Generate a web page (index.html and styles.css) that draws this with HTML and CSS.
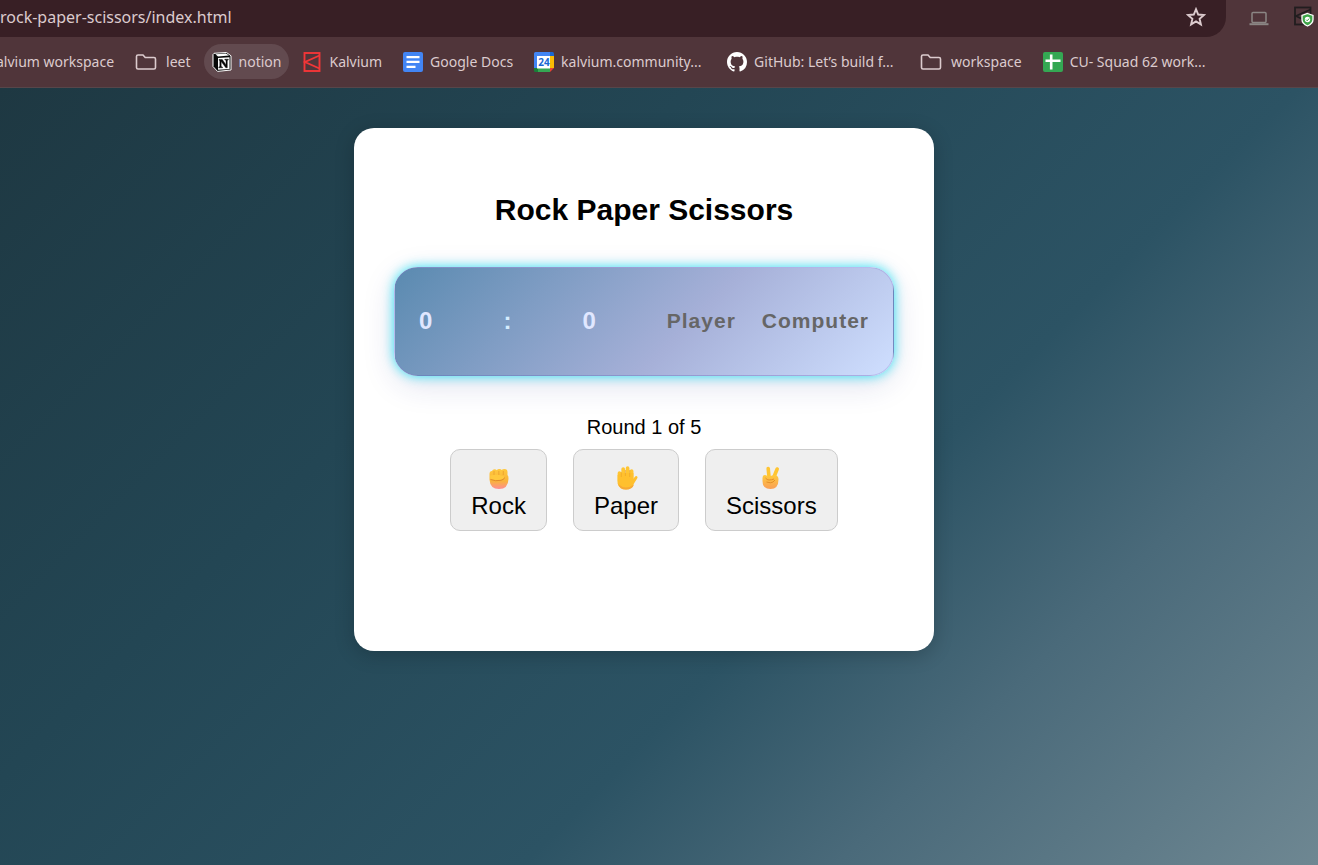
FILE: index.html
```html
<!DOCTYPE html>
<html lang="en">
<head>
<meta charset="utf-8">
<title>Rock Paper Scissors</title>
<link rel="stylesheet" href="styles.css">
</head>
<body>
<header class="browser">
  <div class="toolbar">
    <div class="omnibox">
      <input class="url" type="text" aria-label="Address" value="rock-paper-scissors/index.html">
      <button class="icon-button" type="button" aria-label="Bookmark this page">
        <svg width="20" height="20" viewBox="0 0 20 20" fill="none" stroke="#dccbce" stroke-width="1.9"><path d="M10 2.200l2.200 5.300 5.800.5-4.400 3.800 1.300 5.600-4.900-3-4.900 3 1.300-5.600L2 8l5.800-.5z"/></svg>
      </button>
    </div>
    <div class="extensions">
      <button class="icon-button" type="button" aria-label="Device">
        <svg width="20" height="20" viewBox="0 0 20 20" fill="none" stroke="#8b8684" stroke-width="1.500"><rect x="3" y="5.500" width="14" height="10" rx="1"/><path d="M.5 17.200h19" stroke-width="2"/></svg>
      </button>
      <button class="icon-button" type="button" aria-label="Kalvium extension">
        <svg width="22" height="22" viewBox="0 0 22 22"><g fill="none" stroke="#211d1f" stroke-width="1.800"><rect x="2" y="1.500" width="15.500" height="17"/><path d="M17.500 3.500L3 10l14.500 7"/></g><path d="M14.500 7.500l5.500 2v4q0 4-5.500 6.500-5.500-2.500-5.500-6.500v-4z" fill="#3fa549" stroke="#fff" stroke-width="1.300"/><circle cx="14.500" cy="13.500" r="2.700" fill="#fff"/><path d="M13 13.600l1.200 1.200 2-2.300" fill="none" stroke="#3fa549"/></svg>
      </button>
    </div>
  </div>
  <nav class="bookmarks" aria-label="Bookmarks">
    <a class="bookmark" href="#"><span>alvium workspace</span></a>
    <a class="bookmark folder" href="#"><svg width="22" height="18" viewBox="0 0 22 18" fill="none" stroke="#dccbce" stroke-width="1.600"><path d="M1.500 3.500q0-1.500 1.500-1.500h5l2.200 2.500H19q1.500 0 1.500 1.500v8.500q0 1.500-1.500 1.500H3q-1.500 0-1.500-1.500z"/></svg><span>leet</span></a>
    <a class="bookmark active" href="#"><svg width="20" height="20" viewBox="0 0 20 20"><path d="M2 1.300L14.500.5 19 3.800V18L5.500 19.400 1 14.500V2.500z" fill="#080808" stroke="#fff" stroke-width="1"/><path d="M6 6L17.500 5.200V17L6 17.800z" fill="#fff"/><path d="M3.500 2.300l10.500-.7 3 2L6 4.400z" fill="#fff"/><path d="M7 7.500h3.300l3.700 5.300V8.300l-1.200-.3V7.200h3.500v.8l-1 .4v7.300h-1.500L9.200 9.600v4.900l1.300.5v.8H6.800v-.9l1-.4V8.600L7 8.200z" fill="#080808" stroke="#080808" stroke-width=".4"/></svg><span>notion</span></a>
    <a class="bookmark" href="#"><svg width="20" height="20" viewBox="0 0 20 20" fill="none" stroke="#f23638" stroke-width="1.900"><rect x="2.500" y="1" width="15" height="18"/><path d="M17.500 3.500L3 10l14.500 6.500"/></svg><span>Kalvium</span></a>
    <a class="bookmark" href="#"><svg width="20" height="20" viewBox="0 0 20 20"><rect width="20" height="20" rx="2" fill="#4285f4"/><path d="M3.500 5.200h13M3.500 9.900h13M3.500 14.800h9" stroke="#fff" stroke-width="2.200"/></svg><span>Google Docs</span></a>
    <a class="bookmark wide" href="#"><svg width="20" height="20" viewBox="0 0 20 20"><path d="M1.500 0H16v4H4v12H0V1.500Q0 0 1.500 0z" fill="#4285f4"/><path d="M16 0h2.500Q20 0 20 1.500V4h-4z" fill="#1967d2"/><path d="M16 4h4v12h-4z" fill="#fbbc04"/><path d="M4 16h12v4H4z" fill="#34a853"/><path d="M0 16h4v4H1.500Q0 20 0 18.500z" fill="#188038"/><path d="M16 16h4l-4 4z" fill="#ea4335"/><path d="M3 4h13v12.500H3z" fill="#fff"/><text class="cal-day" x="10" y="14" text-anchor="middle">24</text></svg><span>kalvium.community...</span></a>
    <a class="bookmark wide" href="#"><svg width="20" height="20" viewBox="0 0 16 16"><path fill="#fff" d="M8 0C3.580 0 0 3.580 0 8c0 3.540 2.290 6.530 5.470 7.590.4.070.55-.17.55-.38 0-.19-.01-.82-.01-1.490-2.010.37-2.530-.49-2.690-.94-.09-.23-.48-.94-.82-1.130-.28-.15-.68-.52-.01-.53.63-.01 1.080.58 1.230.82.720 1.210 1.870.87 2.330.66.070-.52.28-.87.510-1.070-1.780-.2-3.640-.89-3.640-3.950 0-.87.310-1.590.82-2.150-.08-.2-.36-1.020.08-2.120 0 0 .67-.21 2.200.82.640-.18 1.320-.27 2-.27s1.360.09 2 .27c1.530-1.040 2.200-.82 2.200-.82.440 1.100.16 1.920.08 2.120.51.560.82 1.270.82 2.150 0 3.070-1.870 3.750-3.650 3.950.29.250.54.730.54 1.480 0 1.070-.01 1.930-.01 2.200 0 .21.150.46.55.38A8.010 8.010 0 0016 8c0-4.420-3.580-8-8-8z"/></svg><span>GitHub: Let’s build f...</span></a>
    <a class="bookmark folder" href="#"><svg width="22" height="18" viewBox="0 0 22 18" fill="none" stroke="#dccbce" stroke-width="1.600"><path d="M1.500 3.500q0-1.500 1.500-1.500h5l2.200 2.500H19q1.500 0 1.500 1.500v8.500q0 1.500-1.500 1.500H3q-1.500 0-1.500-1.500z"/></svg><span>workspace</span></a>
    <a class="bookmark wide" href="#"><svg width="20" height="20" viewBox="0 0 20 20"><rect width="20" height="20" rx="2" fill="#34a853"/><path d="M8.200 2.500v15M2.500 8.800h15" stroke="#fff" stroke-width="2.600"/></svg><span>CU- Squad 62 work...</span></a>
  </nav>
</header>
<main class="page">
  <section class="card">
    <h1 class="title">Rock Paper Scissors</h1>
    <div class="scoreboard">
      <span class="score">0</span>
      <span class="score colon">:</span>
      <span class="score">0</span>
      <div class="labels"><span>Player</span><span>Computer</span></div>
    </div>
    <p class="round">Round 1 of 5</p>
    <div class="choices">
      <button class="choice" type="button">
        <svg width="28" height="28" viewBox="0 0 28 28"><defs><linearGradient id="fist" x2="0" y2="1"><stop offset="0" stop-color="#ffc83d"/><stop offset=".6" stop-color="#f9b43a"/><stop offset="1" stop-color="#ff8d91"/></linearGradient></defs><path d="M4.500 10q0-3 2.500-3 .7-1.800 2.500-1.800 1.600 0 2.300 1 .7-1.200 2.500-1.200 1.700 0 2.400 1.100Q17.500 5 19.500 5q3 0 3 3v3q1.200.8 1 4-.3 10-9.500 10-9 0-9.500-9.500z" fill="url(#fist)"/><path d="M9 7v4M13.800 7v4M18.300 7v4" fill="none" stroke="#e9a02c" stroke-width=".8"/><path d="M5 11.500q7-1.500 13 .5 3.500 1.500 0 3.500-5 1.500-12.500 0z" fill="#ffc83d"/><path d="M5.500 15.500q5 2 10.500.8 3.500-.8 3.500-2.800" fill="none" stroke="#e08a2c" stroke-width="1"/></svg>
        <span>Rock</span>
      </button>
      <button class="choice" type="button">
        <svg width="28" height="28" viewBox="0 0 28 28"><path d="M7.500 17V9M11.200 14V5M15.600 14V4.200M19.600 15V7" stroke="#ffc533" stroke-width="3.700" stroke-linecap="round"/><path d="M5.600 11l4-2h11.800v6l1.100-1.800q1.700-2 2.700-.8.900.9-.2 2.400L22 19.500Q20 25.500 14 25.500q-7 0-8.400-6z" fill="#ffc02e"/><path d="M9.300 8v5M13.400 6v6M17.700 6v7" stroke="#eda526" stroke-width=".7"/><path d="M6 20q2 5.500 8 5.500 6.500 0 8-5-4 3-8 3t-8-3.500z" fill="#f7a936"/></svg>
        <span>Paper</span>
      </button>
      <button class="choice" type="button">
        <svg width="28" height="28" viewBox="0 0 28 28"><defs><linearGradient id="victory" x2="0" y2="1"><stop offset="0" stop-color="#ffca3b"/><stop offset="1" stop-color="#f99f57"/></linearGradient></defs><path d="M12.200 15L11.200 4.500M16.500 14l3.700-9" stroke="#ffc532" stroke-width="3.600" stroke-linecap="round"/><path d="M5.500 14q0-3 2.500-3 2 0 2.500 1.500l7.500-1.500q3.500.5 3.500 4.500 0 9.500-8 9.500-8 0-8-8z" fill="url(#victory)"/><path d="M8.500 14q1.500 2 3.500 2 2.500 0 5-1M9.500 18q4.500 1.500 6.500 0l2-2" fill="none" stroke="#df8a25" stroke-width=".9"/></svg>
        <span>Scissors</span>
      </button>
    </div>
  </section>
</main>
</body>
</html>
```

FILE: styles.css
```css
* { box-sizing: border-box; }
body {
  margin: 0;
  min-height: 100vh;
  display: flex;
  flex-direction: column;
  font-family: "Liberation Sans", Arial, sans-serif;
  overflow-x: hidden;
}
button { font: inherit; }
.browser {
  background: #50353a;
  border-bottom: 1px solid #57464a;
  font-family: "Noto Sans", "Segoe UI", sans-serif;
  color: #dccbce;
}
.toolbar { display: flex; height: 37px; }
.omnibox {
  flex: 1;
  display: flex;
  align-items: center;
  padding: 0 20px 4px 0;
  background: #381f25;
  border-radius: 0 0 20px 0;
}
.url {
  flex: 1;
  min-width: 0;
  padding: 0;
  border: 0;
  background: none;
  color: inherit;
  font: 16px "Noto Sans", "Segoe UI", sans-serif;
}
.icon-button {
  display: flex;
  padding: 0;
  border: 0;
  background: none;
}
.extensions {
  width: 92px;
  display: flex;
  align-items: center;
  gap: 24px;
  padding: 0 0 4px 23px;
}
.extensions .icon-button { flex-shrink: 0; }
.bookmarks {
  display: flex;
  align-items: center;
  height: 49px;
  margin: 0 0 1px -4px;
  gap: 5px;
}
.bookmark {
  display: flex;
  align-items: center;
  gap: 7px;
  height: 35px;
  padding: 0 8px;
  border-radius: 18px;
  color: inherit;
  font-size: 14px;
  text-decoration: none;
  white-space: nowrap;
}
.bookmark:first-child { padding-left: 0; }
.bookmark svg { flex-shrink: 0; }
.bookmark.folder { gap: 9px; }
.bookmark.wide span { min-width: 145px; }
.bookmark.active { background: #624a4f; }
.cal-day { font: bold 10px "Open Sans", sans-serif; fill: #1967d2; }
.page {
  flex: 1;
  padding: 40px 30px 40px 0;
  background: linear-gradient(135deg, #1e3842, #234654 33%, #2c5364 62%, #4a6a7a 77%, #6e8792);
}
.card {
  width: 100%;
  max-width: 580px;
  margin: 0 auto;
  padding: 64px 40px 120px;
  border-radius: 20px;
  background: #fff;
  box-shadow: 0 4px 20px rgba(0, 0, 0, 0.2);
  text-align: center;
}
.title { margin: 0 0 39px; font-size: 30px; line-height: 36px; }
.scoreboard {
  display: flex;
  justify-content: space-between;
  align-items: center;
  height: 109px;
  padding: 0 24px 2px;
  border: 1px solid rgba(140, 120, 210, 0.3);
  border-radius: 24px;
  background: linear-gradient(135deg, #5a8ab0, #a6b0d8 58%, #cfdfff);
  box-shadow: 0 0 12px rgba(0, 220, 245, 0.8), 0 8px 32px rgba(31, 38, 135, 0.15);
  letter-spacing: 1px;
  font-weight: bold;
}
.score { color: #e0e7ff; font-size: 24px; }
.colon { color: #d5ecff; }
.labels { display: flex; gap: 26px; color: #666; font-size: 21px; }
.round { margin: 39px 0 10px; font-size: 20px; line-height: 24px; }
.choices { display: flex; justify-content: center; gap: 26px; }
.choice {
  display: flex;
  flex-direction: column;
  align-items: center;
  padding: 14px 20px 10px;
  border: 1px solid #ccc;
  border-radius: 10px;
  background: #efefef;
  color: #000;
  font-size: 24px;
  line-height: 28px;
}
```
